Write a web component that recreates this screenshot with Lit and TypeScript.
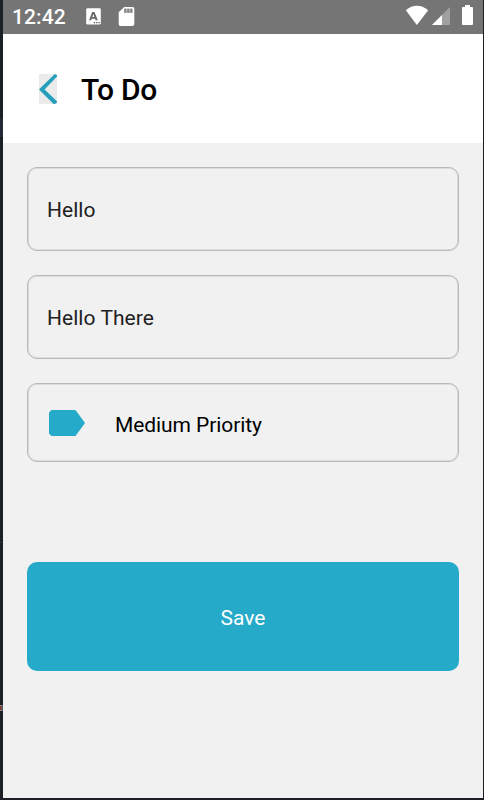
import { LitElement, html, css, svg } from "lit";
import { customElement, property } from "lit/decorators.js";

@customElement("status-bar")
class StatusBar extends LitElement {
  static styles = css`
    :host {
      display: flex;
      justify-content: space-between;
      height: 34px;
      background: #757575;
      color: #fff;
    }
    .left {
      display: flex;
      padding-left: 9px;
    }
    .time {
      width: 73px;
      font: 500 21px/34px Roboto, sans-serif;
      letter-spacing: 0.1px;
      white-space: nowrap;
    }
    svg {
      display: block;
      height: 34px;
    }
  `;
  render() {
    return html`
      <div class="left">
        <span class="time">12:42</span>
        <svg width="55" height="34" viewBox="0 0 55 34">
          <rect x="1.2" y="8.2" width="14.6" height="16.4" rx="1.4" fill="#fff" />
          <path d="M7.2 12 H9.5 L12.8 20.3 H10.6 L10 18.7 H6.7 L6.1 20.3 H4 Z M7.3 17 H9.4 L8.35 14.1 Z" fill="#686868" fill-rule="evenodd" />
          <path d="M8.8 22h1.3v1.3h-1.3z M11.1 22h1.3v1.3h-1.3z M13.4 22h1.3v1.3h-1.3z" fill="#555" />
          <path d="M39.3 7 H47.6 Q49.3 7 49.3 8.7 V24 Q49.3 26 47.5 26 H35.5 Q33.7 26 33.7 24 V12.3 Z" fill="#fff" />
          <path d="M39 8.6h8.6v4.4h-8.6z" fill="#c4c4c4" />
          <path d="M39.3 8.8h2v4h-2z M42.3 8.8h2v4h-2z M45.3 8.8h2v4h-2z" fill="#858585" />
        </svg>
      </div>
      <svg width="80" height="34" viewBox="0 0 80 34">
        <path d="M2.8 10.3 Q13.9 1.4 25.2 10.3 L13.9 25 Z" fill="#fff" />
        <path d="M47 7 V25 H29 Z" fill="#a0a0a0" />
        <path d="M39 15 V25 H29 Z" fill="#fff" />
        <path d="M62 5 h5 v2 h2 q1 0 1 1 V24 q0 1 -1 1 H60 q-1 0 -1 -1 V8 q0 -1 1 -1 h2 z" fill="#fff" />
      </svg>
    `;
  }
}

@customElement("screen-header")
class ScreenHeader extends LitElement {
  @property() heading = "";
  static styles = css`
    :host {
      display: flex;
      align-items: center;
      box-sizing: border-box;
      height: 109px;
      padding-left: 36px;
      gap: 24px;
      background: #fff;
    }
    svg {
      display: block;
      background: #ebebeb;
    }
    .title {
      margin: 0;
      padding-top: 2px;
      font: 500 30px/36px Roboto, sans-serif;
      letter-spacing: -0.25px;
      color: #000;
    }
  `;
  render() {
    return html`
      <svg width="18" height="30" viewBox="0 0 18 30">
        <path d="M15.8 0 L18 1.2 V2.6 L5.6 15.4 L18 27.2 V28.6 L15.8 30 L14.6 30 L0.4 15.9 V14.9 Z" fill="#259fbc" />
      </svg>
      <h1 class="title">${this.heading}</h1>
    `;
  }
}

@customElement("app-root")
class AppRoot extends LitElement {
  static styles = css`
    :host {
      display: block;
      box-sizing: border-box;
      height: 800px;
      padding: 0 1px 2px 3px;
      background:
        linear-gradient(#9a8080 1px, #7b4038 1px 5px, #9a8080 5px) 0 705px / 2px 6px no-repeat,
        linear-gradient(#4a6078, #4a6078) 2px 705px / 1px 6px no-repeat,
        linear-gradient(#262a36, #262a36) 0 119px / 3px 18px no-repeat,
        linear-gradient(#34373d, #34373d) 0 542px / 2px 1px no-repeat,
        #1c1f26;
      font-family: Roboto, sans-serif;
    }
    .screen {
      display: flex;
      flex-direction: column;
      height: 798px;
      background: #f1f1f1;
    }
    .form {
      display: flex;
      flex-direction: column;
      gap: 24px;
      padding: 24px;
    }
    .field {
      display: flex;
      align-items: center;
      box-sizing: border-box;
      height: 84px;
      padding: 2px 19px 0;
      border: 1px solid #b9b9b9;
      border-radius: 10px;
      box-shadow: inset 0 0 0 0.8px #d6d6d6;
      font-size: 21px;
      line-height: 25px;
      letter-spacing: 0.05px;
      color: #212121;
    }
    .priority {
      height: 79px;
      padding-left: 21px;
      gap: 30px;
      color: #000;
    }
    .tag {
      display: block;
      margin-bottom: 2px;
    }
    .label {
      padding-top: 3px;
      letter-spacing: -0.08px;
    }
    .save {
      height: 109px;
      margin-top: 76px;
      padding: 3px 0 0;
      border: 0;
      border-radius: 10px;
      background: #26aac9;
      color: #fff;
      font: 400 21px/25px Roboto, sans-serif;
    }
  `;
  render() {
    return html`
      <div class="screen">
        <status-bar></status-bar>
        <screen-header heading="To Do"></screen-header>
        <div class="form">
          <div class="field">Hello</div>
          <div class="field">Hello There</div>
          <div class="field priority">
            <svg class="tag" width="36" height="26" viewBox="0 0 36 26">
              ${svg`<path d="M2.5 0 H26.5 L36 13 L26.5 26 H2.5 L0 23.5 V2.5 Z" fill="#26aac9" />`}
            </svg>
            <span class="label">Medium Priority</span>
          </div>
          <button class="save">Save</button>
        </div>
      </div>
    `;
  }
}
